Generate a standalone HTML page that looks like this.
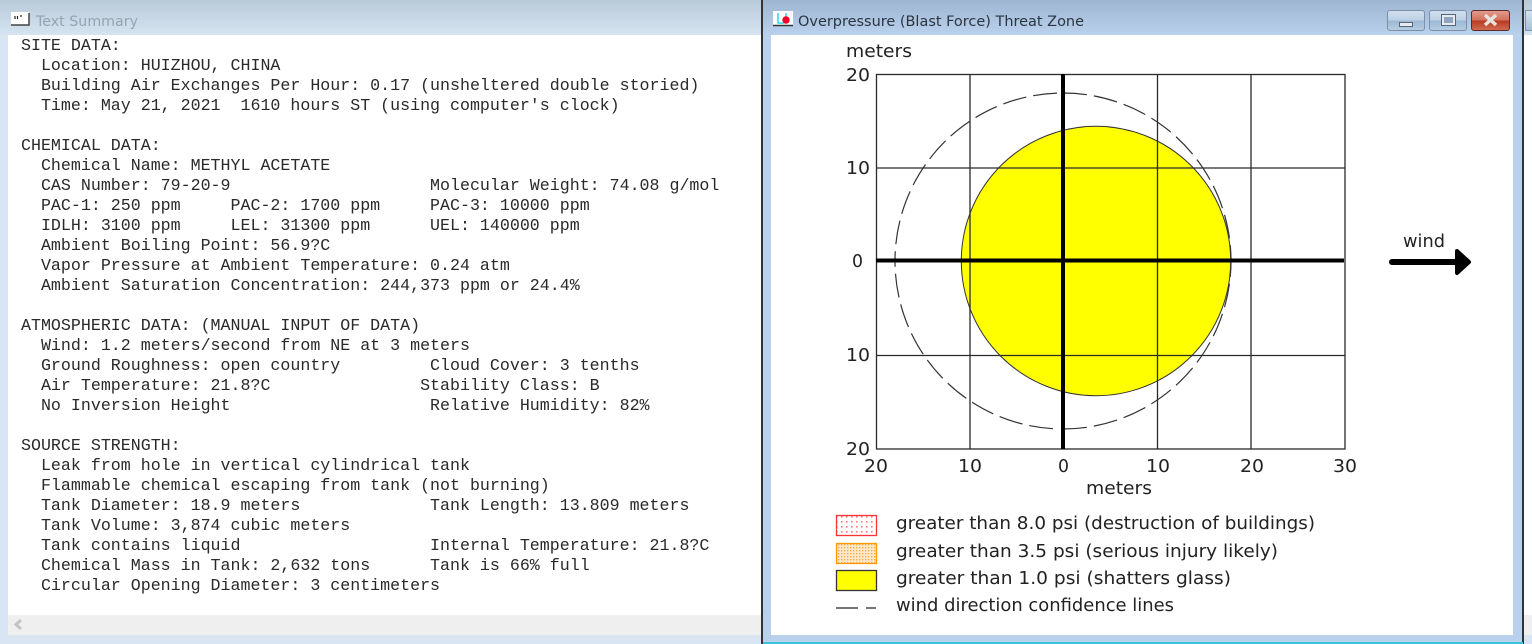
<!DOCTYPE html>
<html><head><meta charset="utf-8"><title>Overpressure</title>
<style>
html,body{margin:0;padding:0;width:1532px;height:644px;overflow:hidden;background:#fff}
.a{position:absolute}
pre{position:absolute;left:21px;top:36px;margin:0;font:16.64px/20px "Liberation Mono",monospace;color:#2a2a2a}
</style></head><body>
<div class="a" style="left:0;top:0;width:1532px;height:644px;background:#d9e5f3"></div>
<div class="a" style="left:0;top:0;width:1532px;height:35px;background:linear-gradient(#b8c9d8,#d6e4f1)"></div>
<div class="a" style="left:8px;top:35px;width:1524px;height:580px;background:#fff"></div>
<div class="a" style="left:8px;top:615px;width:1524px;height:20px;background:#efefef"></div>
<pre>SITE DATA:
  Location: HUIZHOU, CHINA
  Building Air Exchanges Per Hour: 0.17 (unsheltered double storied)
  Time: May 21, 2021  1610 hours ST (using computer's clock)

CHEMICAL DATA:
  Chemical Name: METHYL ACETATE
  CAS Number: 79-20-9                    Molecular Weight: 74.08 g/mol
  PAC-1: 250 ppm     PAC-2: 1700 ppm     PAC-3: 10000 ppm
  IDLH: 3100 ppm     LEL: 31300 ppm      UEL: 140000 ppm
  Ambient Boiling Point: 56.9?C
  Vapor Pressure at Ambient Temperature: 0.24 atm
  Ambient Saturation Concentration: 244,373 ppm or 24.4%

ATMOSPHERIC DATA: (MANUAL INPUT OF DATA)
  Wind: 1.2 meters/second from NE at 3 meters
  Ground Roughness: open country         Cloud Cover: 3 tenths
  Air Temperature: 21.8?C               Stability Class: B
  No Inversion Height                    Relative Humidity: 82%

SOURCE STRENGTH:
  Leak from hole in vertical cylindrical tank
  Flammable chemical escaping from tank (not burning)
  Tank Diameter: 18.9 meters             Tank Length: 13.809 meters
  Tank Volume: 3,874 cubic meters
  Tank contains liquid                   Internal Temperature: 21.8?C
  Chemical Mass in Tank: 2,632 tons      Tank is 66% full
  Circular Opening Diameter: 3 centimeters</pre>
<!-- back window button fragment -->
<div class="a" style="left:1525px;top:10px;width:7px;height:21px;background:linear-gradient(#d6e2ee,#a8c0d8);border:1px solid #8095ad;border-right:0;box-sizing:border-box"></div>
<!-- right window frame -->
<div class="a" style="left:761px;top:0;width:1.5px;height:644px;background:#333"></div>
<div class="a" style="left:1522px;top:0;width:1.5px;height:644px;background:#333"></div>
<div class="a" style="left:762.5px;top:0;width:759.5px;height:642px;background:#b9d1ec"></div>
<div class="a" style="left:762.5px;top:0;width:759.5px;height:35px;background:linear-gradient(#9db5d1,#b9d1ec)"></div>
<div class="a" style="left:763px;top:642px;width:760px;height:2px;background:#3cc3da"></div>
<div class="a" style="left:771px;top:35px;width:742px;height:600px;background:#fff"></div>
<!-- window buttons -->
<div class="a" style="left:1387px;top:10px;width:38px;height:21px;box-sizing:border-box;border:1px solid #7d8fa8;border-radius:3px;background:linear-gradient(#d0dfee 0,#bcd0e4 48%,#9db8d3 52%,#b5cde3 100%)"><div class="a" style="left:11px;top:11px;width:14px;height:5px;box-sizing:border-box;background:#e6e9ee;border:1px solid #55657a"></div></div>
<div class="a" style="left:1429px;top:10px;width:38px;height:21px;box-sizing:border-box;border:1px solid #7d8fa8;border-radius:3px;background:linear-gradient(#d0dfee 0,#bcd0e4 48%,#9db8d3 52%,#b5cde3 100%)"><div class="a" style="left:12px;top:4px;width:13px;height:10px;box-sizing:border-box;background:#8fa5bd;border:2px solid #e6e9ee;outline:1px solid #55657a"></div></div>
<div class="a" style="left:1471px;top:10px;width:39px;height:21px;box-sizing:border-box;border:1px solid #5b2a2a;border-radius:3px;background:linear-gradient(#e29a8a 0,#d4705d 48%,#b83a22 52%,#cf6a50 100%)"></div>
<svg class="a" style="left:0;top:0" width="1532" height="644" viewBox="0 0 1532 644" font-family="'DejaVu Sans',sans-serif">
<defs>
<pattern id="p1" width="5" height="5" patternUnits="userSpaceOnUse"><rect width="5" height="5" fill="#fff"/><rect x="1" y="1" width="1.6" height="1.6" fill="#f77"/></pattern>
<pattern id="p2" width="3" height="3" patternUnits="userSpaceOnUse"><rect width="3" height="3" fill="#fde8c8"/><rect x="1" y="1" width="1.3" height="1.3" fill="#f5a63c"/></pattern>
</defs>
<!-- close X -->
<path d="M1485 15l11 10M1496 15l-11 10" stroke="#e8e2de" stroke-width="3.500"/>
<!-- title icons -->
<rect x="11" y="12" width="18" height="13" fill="#fff"/><path d="M11 25h18V13" stroke="#444" stroke-width="1.5" fill="none"/>
<path d="M15 16v3M17.500 16v3M20 16h2" stroke="#222" stroke-width="1.2"/>
<rect x="773" y="11" width="20" height="14" fill="#fff"/><path d="M773 25.500h20" stroke="#333" stroke-width="1.500"/>
<path d="M778 13v10h6M786 13v9" stroke="#28d8ee" stroke-width="1.500" fill="none"/><circle cx="786" cy="20" r="3.700" fill="#f0002a"/>
<!-- titles -->
<text x="36" y="26" font-size="14" fill="#98a4ae" textLength="102" lengthAdjust="spacingAndGlyphs">Text Summary</text>
<text x="798" y="26" font-size="14" fill="#2b3540" textLength="286" lengthAdjust="spacingAndGlyphs">Overpressure (Blast Force) Threat Zone</text>
<!-- plot -->
<circle cx="1096" cy="261" r="134.700" fill="#ff0" stroke="#333" stroke-width="1"/>
<g stroke="#2a2a2a" stroke-width="1.300" fill="none">
<rect x="876.500" y="74.500" width="468.500" height="374.500"/>
<path d="M970 74V449M1157.500 74V449M1251 74V449M876 168H1345M876 355.500H1345"/>
</g>
<g stroke="#333" stroke-width="1.200" fill="none" stroke-dasharray="24 7">
<path d="M1063 93A168 168 0 0 1 1231 261"/>
<path d="M1057 93.100A168 168 0 0 0 895 261"/>
<path d="M1063 429A168 168 0 0 0 1231 261"/>
<path d="M1053 428.700A168 168 0 0 1 895 261"/>
</g>
<path d="M1063 74V449" stroke="#000" stroke-width="4"/>
<path d="M876 260.500H1344" stroke="#000" stroke-width="4"/>
<g font-size="17.500" fill="#222">
<text x="846" y="57" textLength="66" lengthAdjust="spacingAndGlyphs">meters</text>
<text x="846" y="81" textLength="24" lengthAdjust="spacingAndGlyphs">20</text>
<text x="846" y="174" textLength="24" lengthAdjust="spacingAndGlyphs">10</text>
<text x="852" y="267" textLength="11" lengthAdjust="spacingAndGlyphs">0</text>
<text x="846" y="361" textLength="24" lengthAdjust="spacingAndGlyphs">10</text>
<text x="846" y="455" textLength="24" lengthAdjust="spacingAndGlyphs">20</text>
<text x="864" y="472" textLength="24" lengthAdjust="spacingAndGlyphs">20</text>
<text x="958" y="472" textLength="24" lengthAdjust="spacingAndGlyphs">10</text>
<text x="1058" y="472" textLength="11" lengthAdjust="spacingAndGlyphs">0</text>
<text x="1146" y="472" textLength="24" lengthAdjust="spacingAndGlyphs">10</text>
<text x="1240" y="472" textLength="24" lengthAdjust="spacingAndGlyphs">20</text>
<text x="1333" y="472" textLength="24" lengthAdjust="spacingAndGlyphs">30</text>
<text x="1086" y="494" textLength="66" lengthAdjust="spacingAndGlyphs">meters</text>
<text x="1403" y="247" textLength="42" lengthAdjust="spacingAndGlyphs">wind</text>
<text x="896" y="529" textLength="419" lengthAdjust="spacingAndGlyphs">greater than 8.0 psi (destruction of buildings)</text>
<text x="896" y="557" textLength="382" lengthAdjust="spacingAndGlyphs">greater than 3.5 psi (serious injury likely)</text>
<text x="896" y="584" textLength="335" lengthAdjust="spacingAndGlyphs">greater than 1.0 psi (shatters glass)</text>
<text x="896" y="611" textLength="278" lengthAdjust="spacingAndGlyphs">wind direction confidence lines</text>
</g>
<!-- wind arrow -->
<path d="M1392 262H1465" stroke="#000" stroke-width="6" stroke-linecap="round"/>
<path d="M1457 251L1469 262L1457 273Z" fill="#000" stroke="#000" stroke-width="4" stroke-linejoin="round"/>
<!-- legend -->
<rect x="836.500" y="515.500" width="40" height="20" fill="url(#p1)" stroke="#f33" stroke-width="1.300"/>
<rect x="836.500" y="543.500" width="40" height="20" fill="url(#p2)" stroke="#f90" stroke-width="1.300"/>
<rect x="836.500" y="570.500" width="40" height="20" fill="#ff0" stroke="#333" stroke-width="1.300"/>
<path d="M836 608H858M866 608H876" stroke="#222" stroke-width="1.300"/>
<!-- scrollbar arrow -->
<path d="M21 620L16 624.500L21 629" stroke="#c4c4c4" stroke-width="3" fill="none"/>
</svg>
</body></html>
